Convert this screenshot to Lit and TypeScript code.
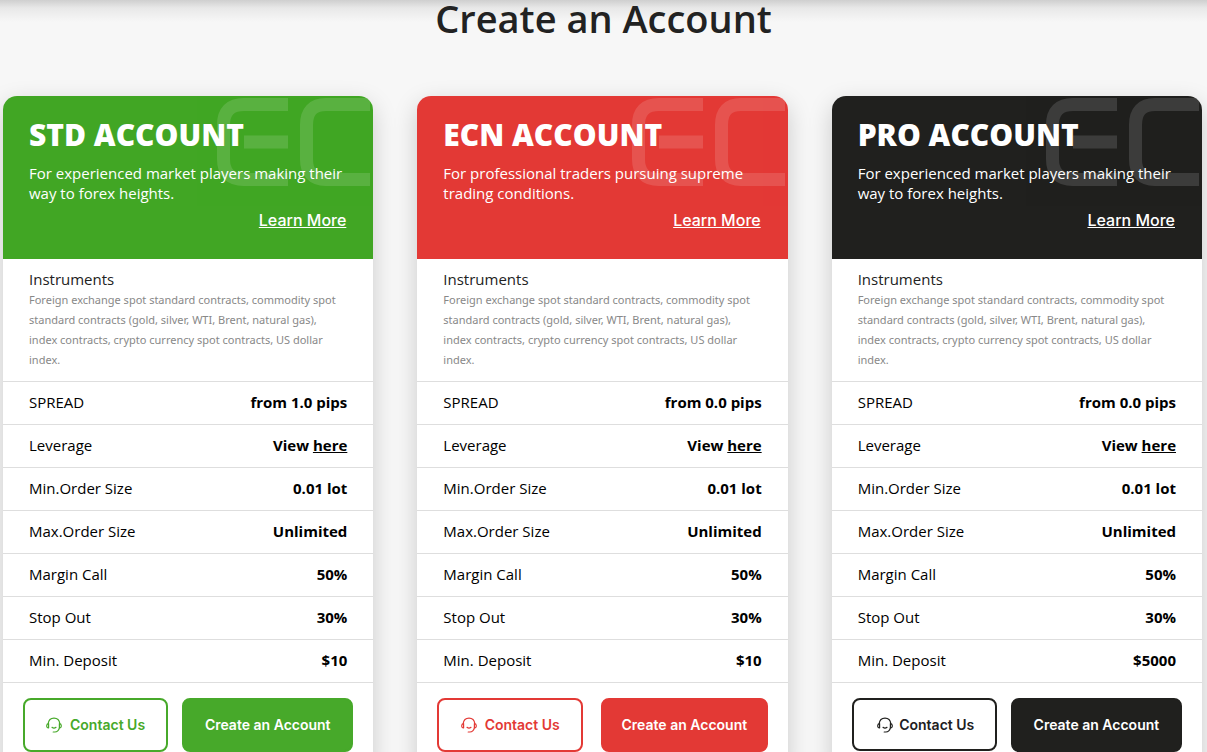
import { LitElement, html, css, svg } from "lit";
import { customElement, property } from "lit/decorators.js";

interface Account {
  tone: "green" | "red" | "dark";
  name: string;
  summary: string;
  spread: string;
  deposit: string;
}

const ACCOUNTS: Account[] = [
  {
    tone: "green",
    name: "STD ACCOUNT",
    summary: "For experienced market players making their way to forex heights.",
    spread: "from 1.0 pips",
    deposit: "$10",
  },
  {
    tone: "red",
    name: "ECN ACCOUNT",
    summary: "For professional traders pursuing supreme trading conditions.",
    spread: "from 0.0 pips",
    deposit: "$10",
  },
  {
    tone: "dark",
    name: "PRO ACCOUNT",
    summary: "For experienced market players making their way to forex heights.",
    spread: "from 0.0 pips",
    deposit: "$5000",
  },
];

const headset = svg`
  <path d="M2.2 6.6C2.6 3.2 5 1.1 8 1.1s5.4 2.1 5.8 5.5" />
  <path d="M2.6 6.6v4.2C1.3 10.9.7 10.1.7 8.8s.6-2.1 1.9-2.2Z" />
  <path d="M13.4 6.6v4.2c1.3.1 1.9-.7 1.9-2s-.6-2.1-1.9-2.2Z" />
  <path d="M13.4 10.8c-.6 2.4-2.3 4-4.6 4.2H7.2" />
  <path d="M6 10.3c1.2 1 2.8 1 4 0" />`;

@customElement("account-card")
export class AccountCard extends LitElement {
  @property({ attribute: false }) account!: Account;

  static styles = css`
    :host {
      display: block;
      min-width: 0;
    }
    .card {
      --tone: #41a624;
      --button: #47a92a;
      background: #fff;
      border-radius: 14px;
      box-shadow: 0 8px 24px rgba(0, 0, 0, 0.18);
    }
    .red {
      --tone: #e33935;
      --button: #e33935;
    }
    .dark {
      --tone: #20201e;
      --button: #20201e;
    }
    .head {
      position: relative;
      display: flex;
      flex-direction: column;
      padding: 20px 26px 27px;
      border-radius: 14px 14px 0 0;
      background: var(--tone);
      color: #fff;
      overflow: hidden;
    }
    .mark {
      position: absolute;
      top: 2px;
      right: 3px;
      width: 153px;
      height: 88px;
      fill: none;
      stroke: #fff;
      stroke-width: 13;
      opacity: 0.13;
    }
    .name {
      position: relative;
      margin: 0 0 9px;
      font-size: 30px;
      font-weight: 800;
      line-height: 38px;
    }
    .summary {
      position: relative;
      margin: 0;
      line-height: 20px;
    }
    .more {
      position: relative;
      align-self: flex-end;
      margin: 5px 1px 0 0;
      font: 500 16px/24px Inter, sans-serif;
      color: inherit;
    }
    .instruments {
      padding: 10px 26px 11px;
      border-bottom: 1px solid #dedede;
    }
    .label {
      margin: 0 0 1px;
      font-size: 15px;
      font-weight: 400;
      line-height: 20px;
      color: #222;
    }
    .detail {
      margin: 0;
      padding-right: 8px;
      font: 11px/20px "Noto Sans", sans-serif;
      color: #888;
    }
    .terms {
      width: 100%;
      border-collapse: collapse;
      line-height: 22px;
      color: #000;
    }
    .terms th,
    .terms td {
      padding: 9px 26px 11px;
      border-bottom: 1px solid #dedede;
    }
    .terms th {
      padding-right: 0;
      text-align: left;
      font-weight: 400;
    }
    .terms td {
      padding-left: 0;
      text-align: right;
      font-weight: 700;
    }
    .here {
      color: inherit;
    }
    .actions {
      display: grid;
      grid-template-columns: 145fr 171fr;
      align-items: start;
      gap: 14px;
      padding: 15px 20px 20px;
    }
    .button {
      display: flex;
      align-items: center;
      justify-content: center;
      gap: 8px;
      box-sizing: border-box;
      height: 54px;
      padding: 0;
      border: 2px solid var(--button);
      border-radius: 8px;
      font: 600 14px/20px Inter, sans-serif;
      white-space: nowrap;
      cursor: pointer;
    }
    .contact {
      background: #fff;
      color: var(--button);
    }
    .create {
      background: var(--button);
      color: #fff;
    }
    .red .actions {
      grid-template-columns: 146fr 167fr;
      gap: 18px;
    }
    .dark .contact {
      height: 53px;
      gap: 6px;
      padding-left: 3px;
    }
    .icon {
      width: 16px;
      height: 16px;
      fill: none;
      stroke: currentColor;
      stroke-width: 1.2;
      stroke-linecap: round;
      stroke-linejoin: round;
    }
  `;

  render() {
    const a = this.account;
    const rows = [
      ["SPREAD", a.spread],
      ["Leverage", html`View <a class="here" href="#leverage">here</a>`],
      ["Min.Order Size", "0.01 lot"],
      ["Max.Order Size", "Unlimited"],
      ["Margin Call", "50%"],
      ["Stop Out", "30%"],
      ["Min. Deposit", a.deposit],
    ];
    return html`
      <article class="card ${a.tone}">
        <header class="head">
          <svg class="mark" viewBox="0 0 153 88" aria-hidden="true">
            <path d="M71 6.500H27Q6.500 6.500 6.500 27V61Q6.500 81.500 27 81.500H71M27 44H71" />
            <path d="M153 6.500H109Q89.500 6.500 89.500 27V61Q89.500 81.500 109 81.500H153" />
          </svg>
          <h2 class="name">${a.name}</h2>
          <p class="summary">${a.summary}</p>
          <a class="more" href="#more">Learn More</a>
        </header>
        <section class="instruments">
          <h3 class="label">Instruments</h3>
          <p class="detail">
            Foreign exchange spot standard contracts, commodity spot standard
            contracts (gold, silver, WTI, Brent, natural gas), index contracts,
            crypto currency spot contracts, US dollar index.
          </p>
        </section>
        <table class="terms">
          <tbody>
            ${rows.map(
              ([label, value]) => html`<tr>
                <th scope="row">${label}</th>
                <td>${value}</td>
              </tr>`
            )}
          </tbody>
        </table>
        <div class="actions">
          <button class="button contact" type="button">
            <svg class="icon" viewBox="0 0 16 16" aria-hidden="true">${headset}</svg>
            Contact Us
          </button>
          <button class="button create" type="button">Create an Account</button>
        </div>
      </article>
    `;
  }
}

@customElement("app-root")
export class AppRoot extends LitElement {
  static styles = css`
    :host {
      display: block;
      min-height: 100vh;
      background: linear-gradient(#cfcfcf, #e8e8e8 8px, #f7f7f7 22px);
      font: 15px/20px "Open Sans", sans-serif;
    }
    .title {
      margin: 0 0 60px;
      font-size: 38px;
      font-weight: 600;
      line-height: 36px;
      text-align: center;
      color: #222;
    }
    .cards {
      display: grid;
      grid-template-columns: repeat(3, minmax(0, 1fr));
      gap: 44px;
      padding: 0 5px 0 3px;
    }
  `;

  render() {
    return html`
      <main>
        <h1 class="title">Create an Account</h1>
        <div class="cards">
          ${ACCOUNTS.map((a) => html`<account-card .account=${a}></account-card>`)}
        </div>
      </main>
    `;
  }
}
